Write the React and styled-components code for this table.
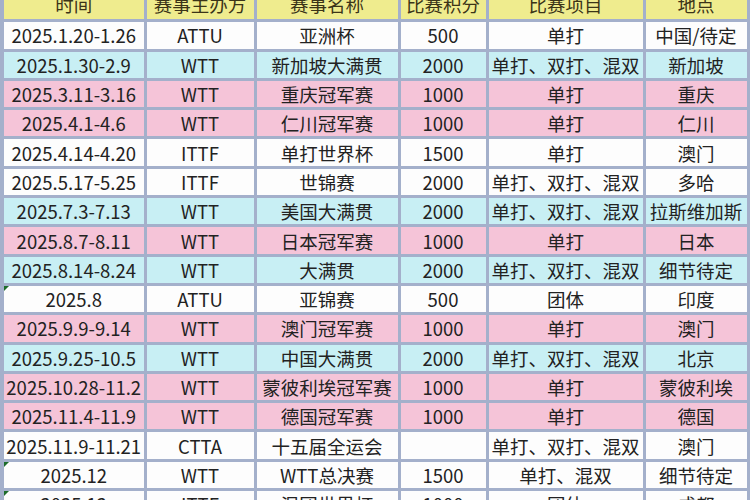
import React from 'react';
import styled, { createGlobalStyle } from 'styled-components';

const GlobalStyle = createGlobalStyle`
  html, body {
    margin: 0;
    padding: 0;
    overflow: hidden;
    background: #ffffff;
  }
  body {
    font-family: "Noto Sans CJK SC", "Noto Sans", sans-serif;
  }
`;

const tones = {
  head: '#efec8e',
  white: '#fdfdfd',
  cyan: '#c8eff4',
  pink: '#f5c4d8',
};

const rows = [
  ['2025.1.20-1.26', 'ATTU', '亚洲杯', '500', '单打', '中国/待定', 'white'],
  ['2025.1.30-2.9', 'WTT', '新加坡大满贯', '2000', '单打、双打、混双', '新加坡', 'cyan'],
  ['2025.3.11-3.16', 'WTT', '重庆冠军赛', '1000', '单打', '重庆', 'pink'],
  ['2025.4.1-4.6', 'WTT', '仁川冠军赛', '1000', '单打', '仁川', 'pink'],
  ['2025.4.14-4.20', 'ITTF', '单打世界杯', '1500', '单打', '澳门', 'white'],
  ['2025.5.17-5.25', 'ITTF', '世锦赛', '2000', '单打、双打、混双', '多哈', 'white'],
  ['2025.7.3-7.13', 'WTT', '美国大满贯', '2000', '单打、双打、混双', '拉斯维加斯', 'cyan'],
  ['2025.8.7-8.11', 'WTT', '日本冠军赛', '1000', '单打', '日本', 'pink'],
  ['2025.8.14-8.24', 'WTT', '大满贯', '2000', '单打、双打、混双', '细节待定', 'cyan'],
  ['2025.8', 'ATTU', '亚锦赛', '500', '团体', '印度', 'white', true],
  ['2025.9.9-9.14', 'WTT', '澳门冠军赛', '1000', '单打', '澳门', 'pink'],
  ['2025.9.25-10.5', 'WTT', '中国大满贯', '2000', '单打、双打、混双', '北京', 'cyan'],
  ['2025.10.28-11.2', 'WTT', '蒙彼利埃冠军赛', '1000', '单打', '蒙彼利埃', 'pink'],
  ['2025.11.4-11.9', 'WTT', '德国冠军赛', '1000', '单打', '德国', 'pink'],
  ['2025.11.9-11.21', 'CTTA', '十五届全运会', '', '单打、双打、混双', '澳门', 'white'],
  ['2025.12', 'WTT', 'WTT总决赛', '1500', '单打、混双', '细节待定', 'white', true],
  ['2025.12', 'ITTF', '混团世界杯', '1000', '团体', '成都', 'white', true],
];

const headers = ['时间', '赛事主办方', '赛事名称', '比赛积分', '比赛项目', '地点'];

const Sheet = styled.div`
  display: grid;
  grid-template-columns: 139.5px 107px 141px 85px 154px 101px;
  grid-auto-rows: 26.3px;
  gap: 3px;
  padding: 0 3.5px 0 4px;
  margin-top: -7px;
  background: #a4b0cb;
`;

const Cell = styled.div`
  position: relative;
  display: flex;
  align-items: center;
  justify-content: center;
  overflow: hidden;
  white-space: nowrap;
  background: ${(p) => tones[p.$tone]};
  color: #222222;
  font-size: 18.5px;

  ${(p) =>
    p.$flag &&
    `
    &::before {
      content: '';
      position: absolute;
      left: 0;
      top: 0;
      border-top: 5px solid #1d6b2a;
      border-right: 5px solid transparent;
    }
  `}
`;

const HeadCell = styled(Cell)`
  color: #3b3418;
  padding-bottom: 4px;
`;

export default function App() {
  return (
    <>
      <GlobalStyle />
      <Sheet>
        {headers.map((h) => (
          <HeadCell key={h} $tone="head">
            {h}
          </HeadCell>
        ))}
        {rows.map((r, i) =>
          r.slice(0, 6).map((text, j) => (
            <Cell key={`${i}-${j}`} $tone={r[6]} $flag={j === 0 && r[7]}>
              {text}
            </Cell>
          ))
        )}
      </Sheet>
    </>
  );
}
